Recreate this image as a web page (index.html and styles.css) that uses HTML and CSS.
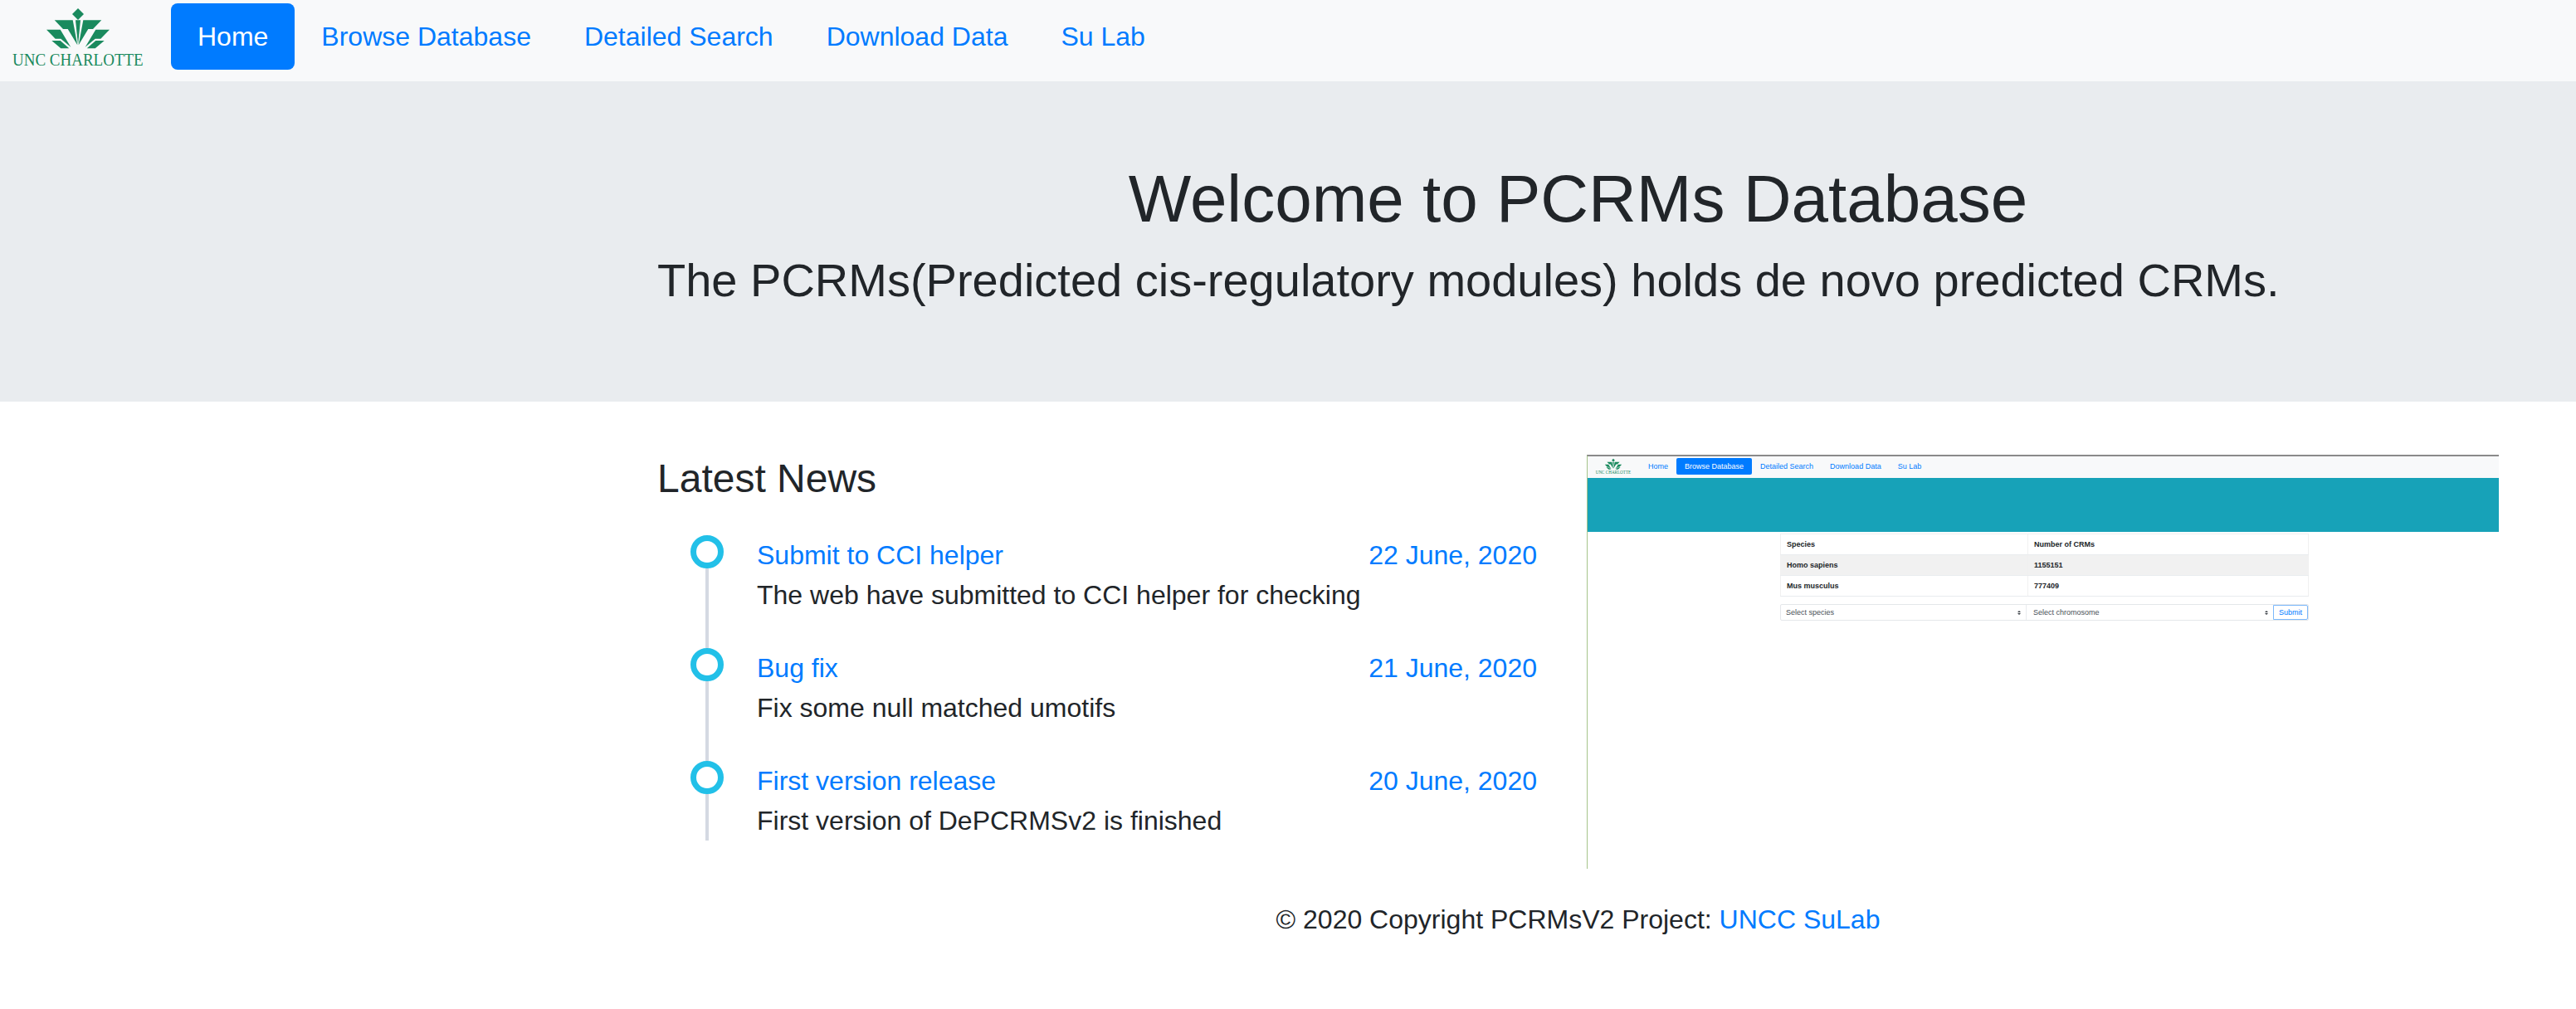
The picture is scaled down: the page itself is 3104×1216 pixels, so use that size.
FILE: index.html
```html
<!DOCTYPE html>
<html lang="en">
<head>
  <meta charset="UTF-8" />
  <title>PCRMs Database</title>
  <link rel="stylesheet" href="styles.css">
</head>
<body>
  <svg class="defs" width="0" height="0" aria-hidden="true">
    <symbol id="unc-mark" viewBox="0 0 160 78">
      <g fill="#1a8a5e">
        <path d="M80 3 87 10 80 17 73 10Z"/>
        <path d="M51.7 17.3H73.7L79.3 47.3 67.7 28H62Z"/>
        <path d="M108.3 17.3H86.3L80.7 47.3 92.3 28H98Z"/>
        <path d="M77 17.3H83L80 47Z"/>
        <path d="M42 28.7H58.7L71.3 49.7 59.3 39.7H52.7Z"/>
        <path d="M118 28.7H101.3L88.7 49.7 100.7 39.7H107.3Z"/>
        <path d="M48.3 42H58.7L69.3 51.3H59.3Z"/>
        <path d="M111.7 42H101.3L90.7 51.3H100.7Z"/>
      </g>
    </symbol>
  </svg>

  <nav class="navbar">
    <svg class="logo" viewBox="0 0 160 78">
      <use href="#unc-mark"/>
      <text class="logo-text" transform="translate(1 72) scale(1 1.12)">UNC CHARLOTTE</text>
    </svg>
    <a class="nav-link active" href="#">Home</a>
    <a class="nav-link" href="#">Browse Database</a>
    <a class="nav-link" href="#">Detailed Search</a>
    <a class="nav-link" href="#">Download Data</a>
    <a class="nav-link" href="#">Su Lab</a>
  </nav>

  <section class="jumbotron">
    <div class="container">
      <h1>Welcome to PCRMs Database</h1>
      <p class="lead">The PCRMs(Predicted cis-regulatory modules) holds de novo predicted CRMs.</p>
    </div>
  </section>

  <main class="container">
    <div class="columns">
      <section class="news">
        <h2>Latest News</h2>
        <ul class="timeline">
          <li class="event">
            <div class="marker"><span class="dot"></span><span class="line"></span></div>
            <div class="event-body">
              <div class="event-head"><a href="#">Submit to CCI helper</a><a href="#">22 June, 2020</a></div>
              <p>The web have submitted to CCI helper for checking</p>
            </div>
          </li>
          <li class="event">
            <div class="marker"><span class="dot"></span><span class="line"></span></div>
            <div class="event-body">
              <div class="event-head"><a href="#">Bug fix</a><a href="#">21 June, 2020</a></div>
              <p>Fix some null matched umotifs</p>
            </div>
          </li>
          <li class="event">
            <div class="marker"><span class="dot"></span><span class="line"></span></div>
            <div class="event-body">
              <div class="event-head"><a href="#">First version release</a><a href="#">20 June, 2020</a></div>
              <p>First version of DePCRMSv2 is finished</p>
            </div>
          </li>
        </ul>
      </section>

      <!-- small picture of the browse page -->
      <section class="preview">
        <div class="mini-nav">
          <svg class="mini-logo" viewBox="0 0 160 78">
            <use href="#unc-mark"/>
            <text class="logo-text" transform="translate(1 72) scale(1 1.12)">UNC CHARLOTTE</text>
          </svg>
          <span class="mini-link">Home</span>
          <span class="mini-link mini-active">Browse Database</span>
          <span class="mini-link">Detailed Search</span>
          <span class="mini-link">Download Data</span>
          <span class="mini-link">Su Lab</span>
        </div>
        <div class="mini-banner"></div>
        <div class="mini-content">
          <table class="mini-table">
            <tr class="mini-head"><td>Species</td><td>Number of CRMs</td></tr>
            <tr class="mini-stripe"><td>Homo sapiens</td><td>1155151</td></tr>
            <tr><td>Mus musculus</td><td>777409</td></tr>
          </table>
          <div class="mini-form">
            <div class="mini-select"><span>Select species</span><span class="updown"></span></div>
            <div class="mini-select mini-select-2"><span>Select chromosome</span><span class="updown"></span></div>
            <div class="mini-submit">Submit</div>
          </div>
        </div>
      </section>
    </div>
  </main>

  <footer class="container footer">© 2020 Copyright PCRMsV2 Project: <a href="#">UNCC SuLab</a></footer>
</body>
</html>
```

FILE: styles.css
```css
* {
  box-sizing: border-box;
}
body {
  margin: 0;
  background: #fff;
  color: #212529;
  font-family: "Liberation Sans", Arial, sans-serif;
  font-size: 32px;
  line-height: 48px;
}
a {
  color: #007bff;
  text-decoration: none;
}
.defs {
  display: block;
  height: 0;
}

/* Navbar */
.navbar {
  display: flex;
  align-items: flex-start;
  height: 98px;
  padding: 4px 0 0 14px;
  background: #f8f9fa;
}
.logo {
  width: 160px;
  height: 78px;
  margin: 3px 32px 0 0;
  flex: none;
}
.logo-text {
  font-family: "Liberation Serif", serif;
  font-size: 19px;
  fill: #1a8a5e;
}
.nav-link {
  padding: 16px 32px;
  border-radius: 8px;
}
.nav-link.active {
  background: #007bff;
  color: #fff;
}

/* Banner */
.jumbotron {
  height: 386px;
  padding-top: 94px;
  background: #e9ecef;
}
.container {
  width: 2219px;
  margin-left: 792px;
}
h1 {
  margin: 0;
  font-size: 80px;
  font-weight: 400;
  line-height: 96px;
  text-align: center;
}
.lead {
  margin: 8px 0 0;
  font-size: 56px;
  line-height: 84px;
}

/* News */
.columns {
  display: grid;
  grid-template-columns: 1060px 1099px;
  column-gap: 60px;
  padding-top: 64px;
}
h2 {
  margin: 0 0 39px;
  font-size: 48px;
  font-weight: 400;
  line-height: 58px;
}
.timeline {
  margin: 0;
  padding: 0;
  list-style: none;
}
.event {
  display: flex;
}
.marker {
  display: flex;
  flex-direction: column;
  align-items: center;
  width: 40px;
  margin: 0 40px;
}
.dot {
  flex: none;
  width: 40px;
  height: 40px;
  border: 7px solid #22c0e8;
  border-radius: 50%;
}
.line {
  flex: 1;
  width: 4px;
  background: #d4d9e2;
}
.event-body {
  flex: 1;
  padding-bottom: 40px;
}
.event:last-child .event-body {
  padding-bottom: 0;
}
.event-head {
  display: flex;
  justify-content: space-between;
}
.event-body p {
  margin: 0;
  white-space: nowrap;
}

/* Preview of browse page */
.preview {
  height: 499px;
  border-top: 2px solid #8a8a8a;
  border-left: 1px solid #a6c48a;
}
.mini-nav {
  display: flex;
  align-items: center;
  height: 26px;
  padding: 0 0 2px 9px;
  background: #f8f9fa;
  font-size: 9px;
  line-height: 20px;
  color: #007bff;
}
.mini-logo {
  width: 44px;
  height: 21px;
  margin-right: 20px;
  flex: none;
}
.mini-link {
  padding: 0 10px;
  border-radius: 2px;
}
.mini-link:first-of-type {
  padding-left: 0;
}
.mini-active {
  background: #007bff;
  color: #fff;
}
.mini-banner {
  height: 65px;
  background: #17a2b8;
}
.mini-content {
  width: 637px;
  margin: 2px 0 0 232px;
  font-size: 9px;
  line-height: 14px;
}
.mini-table {
  width: 100%;
  border-collapse: collapse;
  font-weight: 700;
  border: 1px solid #f0f0f0;
}
.mini-table td {
  height: 25px;
  padding: 0 7px;
  border-bottom: 1px solid #e9ecef;
}
.mini-table td:first-child {
  width: 298px;
  border-right: 1px solid #f0f0f0;
}
.mini-stripe {
  background: #f1f1f1;
}
.mini-form {
  display: flex;
  height: 20px;
  margin-top: 9px;
  color: #495057;
  border: 1px solid #e4e7ea;
  border-radius: 2px;
}
.mini-select {
  flex: none;
  display: flex;
  justify-content: space-between;
  align-items: center;
  width: 296px;
  padding: 0 6px;
  border-right: 1px solid #e9ecef;
}
.mini-select-2 {
  width: 297px;
  padding-left: 8px;
  border-right: 0;
}
.updown {
  display: flex;
  flex-direction: column;
  gap: 1px;
}
.updown::before,
.updown::after {
  content: "";
  border-left: 2px solid transparent;
  border-right: 2px solid transparent;
}
.updown::before {
  border-bottom: 2px solid #343a40;
}
.updown::after {
  border-top: 2px solid #343a40;
}
.mini-submit {
  flex: 1;
  display: flex;
  align-items: center;
  justify-content: center;
  color: #007bff;
  border: 1px solid #7db9fb;
  border-radius: 0 2px 2px 0;
}

/* Footer */
.footer {
  padding-top: 37px;
  text-align: center;
}
```
